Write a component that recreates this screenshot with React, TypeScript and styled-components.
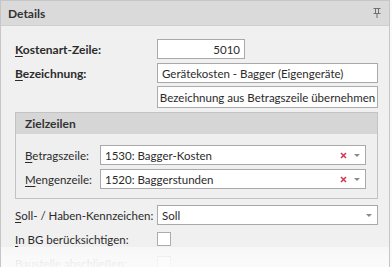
import React from 'react'
import styled, { createGlobalStyle } from 'styled-components'

const Global = createGlobalStyle`
  html, body { margin: 0; padding: 0; background: #fbfbfb; }
  body { font-family: "Lato", "Noto Sans", sans-serif; font-size: 11.5px; color: #2b2b2b; }
`

const Panel = styled.div`
  position: relative;
  width: 388px;
  height: 266px;
  border: 1px solid #c6c6c6;
  border-bottom: none;
  background: #f0f0f0;
  overflow: hidden;
`

const Header = styled.div`
  height: 24px;
  display: flex;
  align-items: center;
  justify-content: space-between;
  padding: 0 8px 0 7px;
  background: #dadada;
  border-bottom: 1px solid #cfcfcf;
  font-size: 12px;
  font-weight: 700;
  color: #333;
`

const Body = styled.div`
  padding: 12px 11px 0 14px;
  display: flex;
  flex-direction: column;
`

const Row = styled.div<{ $label?: number; $mt?: number; $h?: number }>`
  display: grid;
  grid-template-columns: ${p => p.$label ?? 142}px 1fr;
  align-items: center;
  margin-top: ${p => p.$mt ?? 0}px;
  height: ${p => p.$h ?? 20}px;
`

const Label = styled.label<{ $bold?: boolean }>`
  font-size: ${p => (p.$bold ? 12 : 11.5)}px;
  font-weight: ${p => (p.$bold ? 700 : 400)};
  white-space: nowrap;
  u { text-decoration-thickness: 1px; text-underline-offset: 2px; }
`

const TextBox = styled.div<{ $w?: number; $right?: boolean }>`
  box-sizing: border-box;
  height: 20px;
  width: ${p => (p.$w ? `${p.$w}px` : '100%')};
  border: 1px solid #a9a9a9;
  background: #fff;
  display: flex;
  align-items: center;
  justify-content: ${p => (p.$right ? 'flex-end' : 'flex-start')};
  padding: 0 4px;
  white-space: nowrap;
  overflow: hidden;
`

const Button = styled.div`
  box-sizing: border-box;
  height: 22px;
  border: 1px solid #acacac;
  background: #fdfdfd;
  display: flex;
  align-items: center;
  justify-content: center;
  white-space: nowrap;
`

const Group = styled.div`
  margin-top: 4px;
  border: 1px solid #c3c3c3;
  background: #efefef;
`

const GroupHeader = styled.div`
  height: 21px;
  display: flex;
  align-items: center;
  padding-left: 9px;
  background: #d6d6d6;
  font-size: 12px;
  font-weight: 700;
  color: #333;
`

const GroupBody = styled.div`
  padding: 11px 11px 9px 9px;
  display: flex;
  flex-direction: column;
  gap: 4px;
`

const Combo = styled(TextBox)`
  justify-content: space-between;
  padding-right: 5px;
`

const ComboIcons = styled.span`
  display: flex;
  align-items: center;
  gap: 7px;
`

const Caret = styled.span`
  width: 0;
  height: 0;
  border-left: 3.5px solid transparent;
  border-right: 3.5px solid transparent;
  border-top: 3.5px solid #8a8a8a;
`

const Check = styled.div`
  width: 14px;
  height: 14px;
  box-sizing: border-box;
  border: 1px solid #acacac;
  background: #fff;
`

const Fade = styled.div`
  position: absolute;
  left: 0;
  right: 0;
  bottom: 0;
  height: 20px;
  background: linear-gradient(to bottom, rgba(251,251,251,0.6) 0%, rgba(251,251,251,0.9) 60%, rgba(251,251,251,0.95) 100%);
  pointer-events: none;
`

const Pin = () => (
  <svg width="8" height="10" viewBox="0 0 8 10">
    <g fill="none" stroke="#6f6f6f" strokeWidth="1">
      <path d="M0.5 0.5h7" />
      <path d="M2.5 1v4M5.5 1v4" />
      <path d="M0.5 5.5h7" />
      <path d="M4 6v4" />
    </g>
  </svg>
)

const Clear = () => (
  <svg width="7" height="7" viewBox="0 0 7 7">
    <path d="M1 1l5 5M6 1l-5 5" stroke="#d0384a" strokeWidth="1.5" />
  </svg>
)

export default function App() {
  return (
    <>
      <Global />
      <Panel>
        <Header>
          <span>Details</span>
          <Pin />
        </Header>
        <Body>
          <Row $mt={1}>
            <Label $bold><u>K</u>ostenart-Zeile:</Label>
            <TextBox $w={88} $right>5010</TextBox>
          </Row>
          <Row $mt={4}>
            <Label $bold><u>B</u>ezeichnung:</Label>
            <TextBox>Gerätekosten - Bagger (Eigengeräte)</TextBox>
          </Row>
          <Row $mt={3} $h={22}>
            <span />
            <Button>Bezeichnung aus Betragszeile übernehmen</Button>
          </Row>
          <Group>
            <GroupHeader>Zielzeilen</GroupHeader>
            <GroupBody>
              <Row $label={75}>
                <Label><u>B</u>etragszeile:</Label>
                <Combo>
                  <span>1530: Bagger-Kosten</span>
                  <ComboIcons><Clear /><Caret /></ComboIcons>
                </Combo>
              </Row>
              <Row $label={75}>
                <Label><u>M</u>engenzeile:</Label>
                <Combo>
                  <span>1520: Baggerstunden</span>
                  <ComboIcons><Clear /><Caret /></ComboIcons>
                </Combo>
              </Row>
            </GroupBody>
          </Group>
          <Row $mt={6}>
            <Label><u>S</u>oll- / Haben-Kennzeichen:</Label>
            <Combo>
              <span>Soll</span>
              <Caret />
            </Combo>
          </Row>
          <Row $mt={4}>
            <Label><u>I</u>n BG berücksichtigen:</Label>
            <Check />
          </Row>
          <Row $mt={4}>
            <Label><u>B</u>austelle abschließen:</Label>
            <Check />
          </Row>
        </Body>
        <Fade />
      </Panel>
    </>
  )
}
